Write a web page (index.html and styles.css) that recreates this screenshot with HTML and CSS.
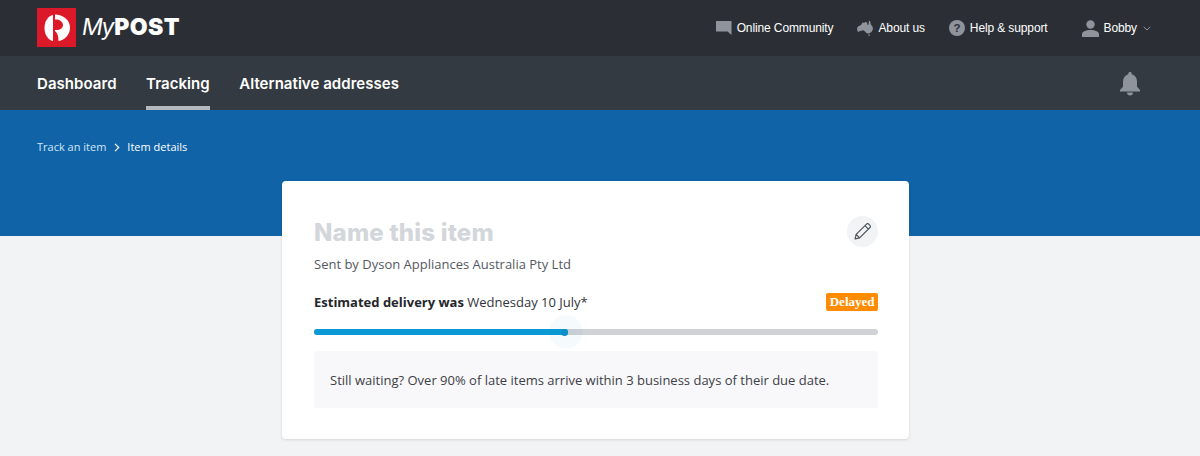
FILE: index.html
```html
<!DOCTYPE html>
<html lang="en">
<head>
<meta charset="utf-8">
<title>MyPost - Item details</title>
<link rel="stylesheet" href="styles.css">
</head>
<body>
<header class="topbar">
  <div class="brand">
    <svg class="logo" viewBox="0 0 39 39" aria-hidden="true">
      <rect width="39" height="39" fill="#dc1928"/>
      <path fill="#fff" d="M16 7v26C11 32 7.500 26.500 7.500 20S11 8 16 7z"/>
      <path fill="#fff" fill-rule="evenodd" d="M18 6.500C26 6.500 33 12 33 19.500 33 26.500 28 32 21.500 33 21.500 28 20.500 25 18 23zM18 11.500v10.500h1.500C23 22 26 20 26 17s-3-5.500-6.500-5.500z"/>
    </svg>
    <span class="wordmark"><i>My</i><b>POST</b></span>
  </div>
  <nav class="toplinks">
    <a class="toplink">
      <svg class="ti" viewBox="0 0 16 16"><path fill="#8f939c" d="M0 1h15.500v14l-4-3.400H0z"/></svg>
      Online Community
    </a>
    <a class="toplink">
      <svg class="ti" viewBox="0 0 16 16"><path fill="#8f939c" d="M0 8.500 1 6.500 4 5 5.500 2.500 7.500 3 8 1.800 10 2.500 10.500 5 11.500 4.500 12 .5 13.200 1.500 13.800 4.500 15.500 6.500 16 9 14.500 12 12 13.500 10 13.500 8 11.500 6.500 10.300 3 11 1 12 .5 11zM11.500 14.400l1.500.2-.5 1.400-1.200-.3z"/></svg>
      About us
    </a>
    <a class="toplink">
      <svg class="ti ti-help" viewBox="0 0 16 16"><circle cx="8" cy="8" r="8" fill="#8f939c"/><text x="8" y="12" class="qmark">?</text></svg>
      Help &amp; support
    </a>
    <a class="toplink user">
      <svg class="ti ti-user" viewBox="0 0 17 17"><circle cx="8.500" cy="4.500" r="4.200" fill="#8f939c"/><path fill="#8f939c" d="M0 17v-3c0-2 3.500-4 8.500-4s8.500 2 8.500 4v3z"/></svg>
      Bobby
      <svg class="caret" viewBox="0 0 8 5"><path d="M.7.800 4 4l3.300-3.200" fill="none" stroke="#8f939c"/></svg>
    </a>
  </nav>
</header>
<nav class="mainnav">
  <ul class="tabs">
    <li class="tab">Dashboard</li>
    <li class="tab active">Tracking</li>
    <li class="tab">Alternative addresses</li>
  </ul>
  <svg class="bell" viewBox="0 0 20 24" aria-hidden="true"><path fill="#8f939c" d="M10 0c1 0 1.700.7 1.700 1.700v.6C15 3.200 17 6 17 9.500v5.200l3 3.300v1.500H0V18l3-3.300V9.500C3 6 5 3.200 8.300 2.300v-.6C8.300.7 9 0 10 0zM7 20.500h6c0 1.800-1.300 3-3 3s-3-1.200-3-3z"/></svg>
</nav>
<section class="hero">
  <div class="crumbs">
    <span class="crumb">Track an item</span>
    <svg class="sep" viewBox="0 0 6 9"><path d="M1 .8 4.700 4.500 1 8.200" fill="none" stroke="#fff" stroke-width="1.200"/></svg>
    <span class="crumb current">Item details</span>
  </div>
</section>
<main class="content">
  <article class="card">
    <div class="title-row">
      <div>
        <h1 class="title">Name this item</h1>
        <p class="sender">Sent by Dyson Appliances Australia Pty Ltd</p>
      </div>
      <button class="edit" type="button" aria-label="Edit">
        <svg viewBox="0 0 16 16"><path d="M1 15l1-4.300L11.800 1c.6-.6 1.400-.6 2 0l1.200 1.200c.6.600.6 1.400 0 2L5.300 14zM2 10.700 5.300 14M10.300 2.500l3.200 3.200" fill="none" stroke="#4d5259" stroke-width="1.100" stroke-linejoin="round"/></svg>
      </button>
    </div>
    <div class="eta-row">
      <p class="eta"><strong>Estimated delivery was</strong> Wednesday 10 July*</p>
      <span class="badge">Delayed</span>
    </div>
    <div class="progress"><div class="progress-fill" style="width:254px"><span class="halo"></span><span class="knob"></span></div></div>
    <div class="notice">Still waiting? Over 90% of late items arrive within 3 business days of their due date.</div>
  </article>
</main>
</body>
</html>
```
FILE: styles.css
```css
* { box-sizing: border-box; }
html, body { margin: 0; height: 456px; overflow: hidden; }
body { background: #f2f3f5; font-family: "Open Sans", "Noto Sans", sans-serif; color: #31343a; }

.topbar {
  height: 56px;
  background: #2b2f35;
  display: flex;
  align-items: center;
  justify-content: space-between;
  padding: 0 49px 0 37px;
}
.brand { display: flex; align-items: center; gap: 6px; margin-top: -1px; }
.logo { width: 39px; height: 39px; display: block; }
.wordmark { color: #fff; font-family: Inter, sans-serif; font-size: 23px; line-height: 1; display: flex; }
.wordmark i { font-weight: 400; letter-spacing: -1.300px; margin-right: 1px; }
.wordmark b { font-weight: 900; letter-spacing: .4px; }

.toplinks { display: flex; align-items: center; }
.toplink {
  display: flex;
  align-items: center;
  color: #fff;
  font-family: "Liberation Sans", Arial, sans-serif;
  font-size: 12px;
  letter-spacing: -.12px;
  margin-left: 24px;
}
.ti { width: 16px; height: 16px; margin-right: 5px; flex: none; }
.qmark { font-family: "Liberation Sans", sans-serif; font-size: 11.500px; font-weight: 700; fill: #2b2f35; text-anchor: middle; }
.user { margin-left: 34px; }
.ti-user { width: 17px; height: 17px; margin-right: 5px; }
.caret { width: 8px; height: 5px; margin-left: 6px; }

.mainnav {
  height: 54px;
  background: #343a41;
  display: flex;
  align-items: flex-start;
  justify-content: space-between;
  padding: 0 60px 0 37px;
}
.tabs { list-style: none; margin: 0; padding: 0; display: flex; gap: 29.500px; }
.tab {
  height: 54px;
  padding-top: 18px;
  font-family: Inter, sans-serif;
  font-weight: 600;
  font-size: 15px;
  line-height: 20px;
  letter-spacing: .05px;
  color: #fff;
}
.tab.active { border-bottom: 4px solid #b4b8bf; }
.bell { width: 20px; height: 24px; margin-top: 16px; }

.hero { height: 126px; background: #1063a6; padding: 30px 37px 0; }
.crumbs { display: flex; align-items: center; font-size: 11px; line-height: 14px; }
.crumb { color: #cfe6f7; }
.crumb.current { color: #fff; }
.sep { width: 6px; height: 9px; margin: 0 7px 0 8px; }

.content { display: flex; justify-content: center; margin-top: -55px; padding-right: 9px; }
.card {
  width: 627px;
  height: 258px;
  background: #fff;
  border-radius: 4px;
  box-shadow: 0 1px 3px rgba(0, 0, 0, .12);
  padding: 35px 31px 0 32px;
}
.title-row { display: flex; justify-content: space-between; align-items: flex-start; }
.title {
  margin: 1px 0 0;
  font-family: Inter, sans-serif;
  font-weight: 800;
  font-size: 24px;
  line-height: 32px;
  letter-spacing: .2px;
  color: #d3d6da;
}
.sender { margin: 6px 0 0; font-size: 13px; line-height: 18px; color: #55595f; }
.edit {
  width: 31px;
  height: 31px;
  border: 0;
  border-radius: 50%;
  background: #f2f3f5;
  padding: 7px;
  display: flex;
}
.edit svg { width: 17px; height: 17px; display: block; }

.eta-row { display: flex; justify-content: space-between; align-items: center; margin-top: 20px; height: 18px; }
.eta { margin: 0; font-size: 13px; line-height: 18px; color: #31343a; }
.eta strong { font-weight: 700; color: #24272c; }
.badge {
  background: #ff8c00;
  color: #fff;
  font-family: "Liberation Serif", serif;
  font-weight: 700;
  font-size: 13px;
  line-height: 18px;
  padding: 0 3.500px;
  border-radius: 2px;
}
.progress { margin-top: 18px; height: 6px; border-radius: 3px; background: #d0d2d6; }
.progress-fill { position: relative; height: 6px; background: #0b9ad6; border-radius: 3px; }
.halo {
  position: absolute;
  right: -15px;
  top: -14px;
  width: 34px;
  height: 34px;
  border-radius: 50%;
  background: rgba(11, 154, 214, .04);
}
.knob {
  position: absolute;
  right: 0;
  top: -.5px;
  width: 7px;
  height: 7px;
  border-radius: 50%;
  background: #0b8fca;
}
.notice {
  margin-top: 16px;
  height: 57px;
  background: #f8f8fa;
  padding: 0 16px;
  display: flex;
  align-items: center;
  font-size: 13px;
  color: #3d4046;
}
```
